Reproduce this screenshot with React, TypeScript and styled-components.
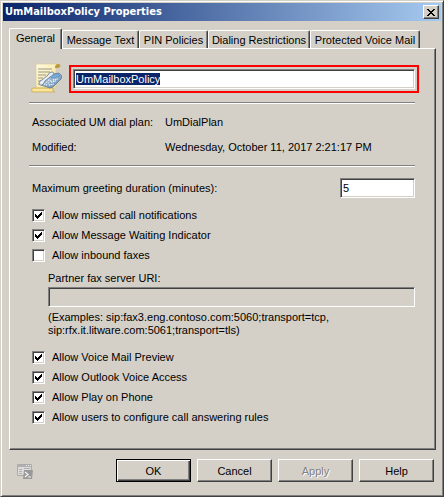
import React, { useEffect, useRef, useState } from "react";
import styled, { createGlobalStyle, css } from "styled-components";

const face = "#d4d0c8";
const shadow = "#808080";
const dark = "#404040";
const light = "#ffffff";

const GlobalStyle = createGlobalStyle`
  * { box-sizing: border-box; }
  body {
    margin: 0;
    background: ${face};
    color: #000;
    font: 11px/14px "Liberation Sans", Arial, sans-serif;
  }
  button, input { font: inherit; color: inherit; }
`;

const sunken = css`
  border: 1px solid;
  border-color: ${shadow} ${light} ${light} ${shadow};
  box-shadow: inset 1px 1px 0 ${dark}, inset -1px -1px 0 ${face};
`;

const raised = css`
  border: 1px solid;
  border-color: ${light} ${dark} ${dark} ${light};
  box-shadow: inset -1px -1px 0 ${shadow};
`;

const Dialog = styled.main`
  display: flex;
  flex-direction: column;
  min-height: 100vh;
  padding: 2px 1px 1px 2px;
  border: 1px solid;
  border-color: ${face} ${dark} ${dark} ${face};
  box-shadow: inset 1px 1px 0 ${light}, inset -1px -1px 0 ${shadow};
`;

const TitleBar = styled.header`
  display: flex;
  align-items: center;
  justify-content: space-between;
  height: 18px;
  padding: 0 2px;
  margin-right: 1px;
  background: linear-gradient(90deg, #0a246a, #a6caf0);
`;

const Title = styled.h1`
  margin: 0;
  color: ${light};
  font: bold 11px/18px "DejaVu Sans Condensed", "Noto Sans", sans-serif;
`;

const CloseButton = styled.button`
  display: flex;
  align-items: center;
  justify-content: center;
  width: 16px;
  height: 14px;
  padding: 0;
  background: ${face};
  ${raised}
`;

const TabList = styled.div`
  display: flex;
  align-items: flex-end;
  height: 20px;
  margin: 7px 6px 0;
`;

const Tab = styled.button<{ $active?: boolean; $width: number }>`
  flex: 0 1 ${(p) => p.$width}px;
  height: ${(p) => (p.$active ? 21 : 18)}px;
  margin-bottom: ${(p) => (p.$active ? -1 : 0)}px;
  padding: 0 0 ${(p) => (p.$active ? 2 : 0)}px;
  position: relative;
  z-index: ${(p) => (p.$active ? 1 : 0)};
  background: ${face};
  border: 1px solid;
  border-color: ${light} ${dark} ${face} ${light};
  border-bottom-width: 0;
  border-radius: 2px 2px 0 0;
  box-shadow: inset -1px 0 0 ${shadow};
  white-space: nowrap;
`;

const Panel = styled.section`
  flex: 1;
  margin: 0 6px;
  padding: 14px 20px 24px 19px;
  ${raised}
`;

const NameRow = styled.div`
  display: flex;
  align-items: center;
  gap: 7px;
  padding-left: 2px;
  margin-bottom: 8px;
`;

const Highlight = styled.div`
  flex: 1;
  display: flex;
  padding: 2px;
  margin-right: -4px;
  border: 2px solid #fe0000;
`;

const TextBox = styled.input<{ $width?: number }>`
  width: ${(p) => (p.$width ? p.$width + "px" : "100%")};
  height: 20px;
  min-width: 0;
  padding: 1px 2px;
  outline: none;
  border-radius: 0;
  background: ${light};
  ${sunken}
  &::selection { background: #0a246a; color: ${light}; }
  &:disabled { background: ${face}; }
`;

const Rule = styled.hr`
  height: 2px;
  margin: 0;
  border: 0;
  border-top: 1px solid ${shadow};
  border-bottom: 1px solid ${light};
`;

const Details = styled.dl`
  display: grid;
  grid-template-columns: 133px 1fr;
  row-gap: 11px;
  margin: 11px 0;
  padding-left: 3px;
`;

const Term = styled.dt``;
const Value = styled.dd`
  margin: 0;
`;

const GreetingRow = styled.div`
  display: flex;
  align-items: center;
  justify-content: space-between;
  margin: 11px 0 10px;
  padding-left: 3px;
`;

const Checks = styled.div`
  display: flex;
  flex-direction: column;
  gap: 6px;
  padding-left: 3px;
`;

const CheckLabel = styled.label`
  display: flex;
  align-items: center;
  gap: 7px;
`;

const CheckCell = styled.span`
  display: grid;
  width: 13px;
  height: 13px;
  & > * { grid-area: 1 / 1; }
`;

const CheckInput = styled.input`
  appearance: none;
  width: 13px;
  height: 13px;
  margin: 0;
  background: ${light};
  ${sunken}
  & + svg { visibility: hidden; pointer-events: none; }
  &:checked + svg { visibility: visible; }
`;

const FaxGroup = styled.div`
  display: flex;
  flex-direction: column;
  gap: 2px;
  margin: 9px 0 13px;
  padding-left: 19px;
`;

const Examples = styled.p`
  margin: 2px 0 0;
  line-height: 13px;
`;

const Footer = styled.footer`
  display: flex;
  align-items: center;
  gap: 6px;
  padding: 9px 8px 13px 14px;
`;

const ScriptButton = styled.button`
  display: flex;
  margin-right: auto;
  padding: 0;
  border: 0;
  background: none;
`;

const PushButton = styled.button<{ $default?: boolean }>`
  width: 75px;
  height: 23px;
  padding: 0;
  background: ${face};
  ${raised}
  ${(p) =>
    p.$default &&
    css`
      border-color: #000;
      box-shadow: inset 1px 1px 0 ${light}, inset -1px -1px 0 ${dark}, inset -2px -2px 0 ${shadow};
    `}
  &:disabled { color: ${shadow}; text-shadow: 1px 1px 0 ${light}; }
`;

function PolicyIcon() {
  return (
    <svg width="31" height="31" viewBox="0 0 31 31" aria-hidden="true">
      <defs>
        <linearGradient id="paper" x1="0" y1="0" x2="1" y2="1">
          <stop offset="0" stopColor="#fffbe0" />
          <stop offset="1" stopColor="#f3dd8c" />
        </linearGradient>
        <linearGradient id="phone" x1="0" y1="0" x2="1" y2="1">
          <stop offset="0" stopColor="#c4dcef" />
          <stop offset="1" stopColor="#5f82a8" />
        </linearGradient>
      </defs>
      <path d="M5 1h22q2 0 2 2t-2 2h-2v20H5V4q0-3 0-3z" fill="url(#paper)" stroke="#d9c88c" strokeWidth=".6" />
      <path d="M24 5q0-4 3-4t2 3l-2 1z" fill="#b99a3c" />
      <path d="M3 25h19q-1 4 2 4H3q-3 0-3-2t3-2z" fill="#f1d880" stroke="#c4a64c" strokeWidth=".6" />
      <path d="M2 27h19" stroke="#fff4bd" />
      <path d="M7 6h14M7 9h12M7 12h8M7 15h5M7 18h3M7 21h2" stroke="#9b9b8c" />
      <path d="M17 12l11-2 3 3-1 3-8 8-3 1-9-3z" fill="url(#phone)" stroke="#4f7296" strokeWidth=".7" />
      <path d="M19 13l8-2 2 2-8 2z" fill="#78b4ea" stroke="#4f7ba8" strokeWidth=".5" />
      <path d="M17 17l3 1M15 19l3 1M13 21l3 1M22 17l5-1M20 19l5-1M18 22l5-1" stroke="#eef5fa" strokeWidth="1.3" strokeDasharray="1.4 .8" />
      <path d="M9 22q-2-1 0-4l2-1 6-5q1-3 4-3t1 3l-3 2-5 4-1 2q-2 3-4 2z" fill="#e6edf3" stroke="#60788f" strokeWidth=".8" />
    </svg>
  );
}

function ScriptIcon() {
  return (
    <svg width="16" height="16" viewBox="0 0 16 16" aria-hidden="true">
      <path d="M.5 1.5h14v11H.5z" fill="#dcdcda" stroke="#aaa" />
      <path d="M1 2h13v2H1z" fill="#b0b0b0" />
      <path d="M9 2.5h1M11 2.5h1M13 2.5h1" stroke="#eee" />
      <path d="M2 6.5h3M2 8.5h3M2 10.5h3M7 5.5h6" stroke="#b0b0b0" />
      <path d="M7 7h9l-1 9H6z" fill="#999" />
      <path d="M8 9l3 2.5L8 14M11 14h3" fill="none" stroke="#f3f3f3" strokeWidth="1.2" />
    </svg>
  );
}

function Check({ label, checked = false }: { label: string; checked?: boolean }) {
  return (
    <CheckLabel>
      <CheckCell>
        <CheckInput type="checkbox" defaultChecked={checked} />
        <svg width="13" height="13" viewBox="0 0 13 13" shapeRendering="crispEdges" aria-hidden="true">
          <path d="M3 5v3l2 2 5-5V2L5 7z" fill="#000" />
        </svg>
      </CheckCell>
      {label}
    </CheckLabel>
  );
}

const tabs = [
  { name: "General", width: 53 },
  { name: "Message Text", width: 77 },
  { name: "PIN Policies", width: 69 },
  { name: "Dialing Restrictions", width: 102 },
  { name: "Protected Voice Mail", width: 110 },
];

export default function App() {
  const nameRef = useRef<HTMLInputElement>(null);
  const [active, setActive] = useState("General");

  useEffect(() => {
    nameRef.current?.focus();
    nameRef.current?.select();
  }, []);

  return (
    <>
      <GlobalStyle />
      <Dialog>
        <TitleBar>
          <Title>UmMailboxPolicy Properties</Title>
          <CloseButton aria-label="Close">
            <svg width="8" height="7" viewBox="0 0 8 7" shapeRendering="crispEdges" aria-hidden="true">
              <path d="M0 0h2v1h1v1h2V1h1V0h2v1H7v1H6v1H5v1h1v1h1v1h1v1H6V6H5V5H3v1H2v1H0V6h1V5h1V4h1V3H2V2H1V1H0z" fill="#000" />
            </svg>
          </CloseButton>
        </TitleBar>
        <TabList role="tablist">
          {tabs.map((t) => (
            <Tab
              key={t.name}
              role="tab"
              aria-selected={active === t.name}
              $active={active === t.name}
              $width={t.width}
              onClick={() => setActive(t.name)}
            >
              {t.name}
            </Tab>
          ))}
        </TabList>
        <Panel role="tabpanel">
          <NameRow>
            <PolicyIcon />
            <Highlight>
              <TextBox ref={nameRef} aria-label="Policy name" defaultValue="UmMailboxPolicy" />
            </Highlight>
          </NameRow>
          <Rule />
          <Details>
            <Term>Associated UM dial plan:</Term>
            <Value>UmDialPlan</Value>
            <Term>Modified:</Term>
            <Value>Wednesday, October 11, 2017 2:21:17 PM</Value>
          </Details>
          <Rule />
          <GreetingRow>
            <label htmlFor="greeting">Maximum greeting duration (minutes):</label>
            <TextBox id="greeting" $width={75} defaultValue="5" />
          </GreetingRow>
          <Checks>
            <Check label="Allow missed call notifications" checked />
            <Check label="Allow Message Waiting Indicator" checked />
            <Check label="Allow inbound faxes" />
          </Checks>
          <FaxGroup>
            <label htmlFor="fax">Partner fax server URI:</label>
            <TextBox id="fax" disabled />
            <Examples>
              (Examples: sip:fax3.eng.contoso.com:5060;transport=tcp,
              <br />
              sip:rfx.it.litware.com:5061;transport=tls)
            </Examples>
          </FaxGroup>
          <Checks>
            <Check label="Allow Voice Mail Preview" checked />
            <Check label="Allow Outlook Voice Access" checked />
            <Check label="Allow Play on Phone" checked />
            <Check label="Allow users to configure call answering rules" checked />
          </Checks>
        </Panel>
        <Footer>
          <ScriptButton aria-label="Show command">
            <ScriptIcon />
          </ScriptButton>
          <PushButton $default>OK</PushButton>
          <PushButton>Cancel</PushButton>
          <PushButton disabled>Apply</PushButton>
          <PushButton>Help</PushButton>
        </Footer>
      </Dialog>
    </>
  );
}
